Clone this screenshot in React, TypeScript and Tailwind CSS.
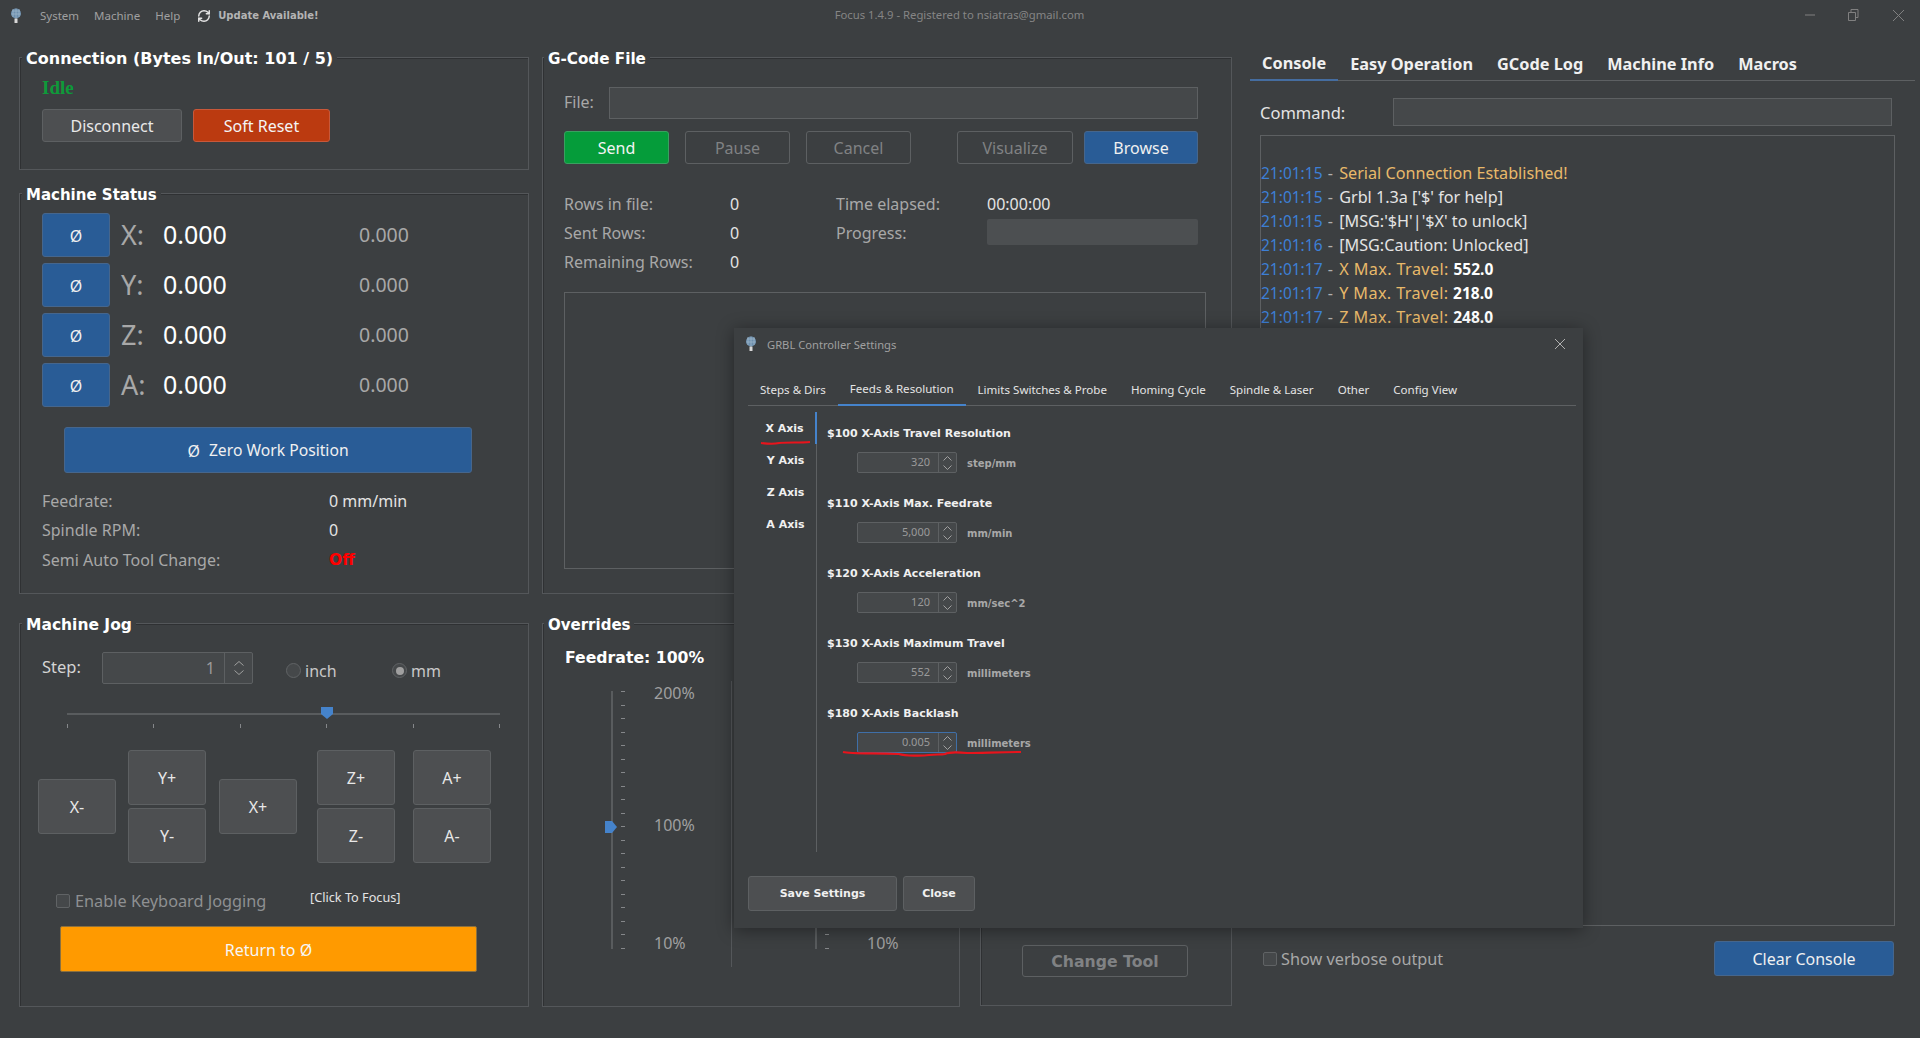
import { RefreshCw } from "lucide-react";

const dejavu = "font-['DejaVu_Sans',sans-serif] font-bold";
const btn = "flex items-center justify-center rounded-[3px] border pt-[1px] text-[16px]";
const grayBtn = `${btn} bg-[#4d4f51] border-[#5d6062] text-[#e8e8e8]`;
const blueBtn = `${btn} bg-[#295c96] border-[#46668c] text-[#f0f0f0]`;
const offBtn = `${btn} border-[#5d6062] text-[#808284]`;
const label = "text-[16px] text-[#a8a8a8]";
const value = "text-[16px] text-[#e4e4e4]";

function Logo() {
  return (
    <svg width="12" height="16" viewBox="0 0 12 16">
      <circle cx="6" cy="5.5" r="5" fill="#6d8fad" />
      <path d="M2 3h8M1.5 6h9M3 1v8M6 0.5v10M9 1v8" stroke="#9db4c8" strokeWidth="0.8" />
      <rect x="4.5" y="10.5" width="3" height="4.5" fill="#d8d8d8" />
    </svg>
  );
}

function Group({ title, size, className, children }: { title?: string; size?: string; className: string; children: React.ReactNode }) {
  return (
    <div className={`relative border border-[#54575a] shadow-[inset_1px_1px_0_#2f3133] ${className}`}>
      {title && (
        <div className={`absolute -top-[11px] bg-[#3c3f41] px-[4px] leading-6 text-white whitespace-nowrap ${dejavu} ${size}`}>
          {title}
        </div>
      )}
      {children}
    </div>
  );
}

function AxisRow({ axis }: { axis: string }) {
  return (
    <div className="flex h-[44px] items-center">
      <div className={`${blueBtn} h-[44px] w-[68px]`}>Ø</div>
      <div className="ml-[11px] w-[42px] text-[27px] text-[#a8a8a8]">{axis}:</div>
      <div className="w-[196px] text-[25px] text-white">0.000</div>
      <div className="text-[19.5px] text-[#a8a8a8]">0.000</div>
    </div>
  );
}

// up/down arrows of a spin box
function SpinArrows({ size }: { size: number }) {
  const h = Math.round(size / 2);
  return (
    <div className="flex flex-col gap-[4px]">
      <svg width={size} height={h} viewBox={`0 0 ${size} ${h}`}>
        <path d={`M0.5 ${h - 0.5}L${size / 2} 0.5L${size - 0.5} ${h - 0.5}`} stroke="#a0a0a0" fill="none" />
      </svg>
      <svg width={size} height={h} viewBox={`0 0 ${size} ${h}`}>
        <path d={`M0.5 0.5L${size / 2} ${h - 0.5}L${size - 0.5} 0.5`} stroke="#a0a0a0" fill="none" />
      </svg>
    </div>
  );
}

function Radio({ text, checked, className }: { text: string; checked?: boolean; className: string }) {
  return (
    <div className={`flex items-center gap-[4px] ${className}`}>
      <div className="flex h-[15px] w-[15px] items-center justify-center rounded-full border border-[#606365] bg-[#45484a]">
        {checked && <div className="h-[8px] w-[8px] rounded-full bg-[#a0a0a0]" />}
      </div>
      <span className="text-[16px] text-[#c8c8c8]">{text}</span>
    </div>
  );
}

function JogBtn({ text, className }: { text: string; className?: string }) {
  return <div className={`${grayBtn} h-[55px] w-[78px] ${className ?? ""}`}>{text}</div>;
}

function VSlider({ labelsAt }: { labelsAt: string }) {
  const ticks = Array.from({ length: 20 });
  return (
    <div className="relative flex h-[258px]">
      <div className="h-[258px] w-[2px] bg-[#595c5e]" />
      <svg className="absolute -left-[6px] top-[130px]" width="12" height="12" viewBox="0 0 12 12">
        <path d="M0 0h7l5 6-5 6H0z" fill="#4583cb" />
      </svg>
      <div className="ml-[8px] flex h-[258px] flex-col justify-between">
        {ticks.map((_, i) => (
          <div key={i} className="h-px w-[4px] bg-[#85878a]" />
        ))}
      </div>
      <div className={`-mt-[8px] text-[16px] leading-5 text-[#a0a0a0] ${labelsAt}`}>
        <div>200%</div>
        <div className="mt-[112px]">100%</div>
        <div className="mt-[98px]">10%</div>
      </div>
    </div>
  );
}

function DialogItem({ title, val, unit, focus }: { title: string; val: string; unit: string; focus?: boolean }) {
  return (
    <div className="h-[70px]">
      <div className={`text-[11px] leading-4 text-[#f0f0f0] ${dejavu}`}>{title}</div>
      <div className="mt-[10px] ml-[30px] flex items-center">
        <div className={`flex h-[21px] w-[100px] rounded-[2px] border bg-[#45484a] ${focus ? "border-[#3f6fa8]" : "border-[#5d6062]"}`}>
          <div className="flex flex-1 items-center justify-end pr-[8px] text-[11px] text-[#9a9a9a]">{val}</div>
          <div className="flex w-[18px] items-center justify-center border-l border-[#5d6062]">
            <SpinArrows size={9} />
          </div>
        </div>
        <span className={`ml-[10px] pt-[2px] text-[10px] text-[#a8a8a8] ${dejavu}`}>{unit}</span>
      </div>
    </div>
  );
}

function SettingsDialog() {
  const tabs = ["Steps & Dirs", "Feeds & Resolution", "Limits Switches & Probe", "Homing Cycle", "Spindle & Laser", "Other", "Config View"];
  return (
    <div className="absolute left-[734px] top-[328px] flex h-[600px] w-[849px] flex-col bg-[#3c3f41] text-[12px] shadow-[0_2px_16px_rgba(0,0,0,0.4)]">
      <div className="flex h-[44px] items-start pt-[8px] pl-[11px] pr-[17px]">
        <Logo />
        <span className="ml-[10px] pt-[1px] text-[11.2px] text-[#a0a0a0]">GRBL Controller Settings</span>
        <svg className="ml-auto mt-[2px]" width="12" height="12" viewBox="0 0 12 12">
          <path d="M1 1l10 10M11 1L1 11" stroke="#b0b0b0" />
        </svg>
      </div>
      <div className="ml-[14px] mr-[7px] flex h-[34px] border-b border-[#5d6062]">
        {tabs.map((t, i) => (
          <div key={t} className={`flex h-[34px] items-center px-[12px] pt-[2px] text-[11.55px] text-[#e4e4e4] ${i === 1 ? "border-b-[2px] border-[#4583cb]" : ""}`}>
            {t}
          </div>
        ))}
      </div>
      <div className="mt-[6px] ml-[14px] flex h-[440px]">
        <div className={`w-[69px] border-r border-[#5d6062] pl-[6px] text-center text-[11px] text-[#f0f0f0] ${dejavu}`}>
          {["X Axis", "Y Axis", "Z Axis", "A Axis"].map((a, i) => (
            <div key={a} className={`-mr-px flex h-[32px] items-center justify-center pt-[2px] ${i === 0 ? "border-r-[2px] border-[#4583cb]" : ""}`}>
              {a}
            </div>
          ))}
        </div>
        <div className="pl-[10px] pt-[14px]">
          <DialogItem title="$100 X-Axis Travel Resolution" val="320" unit="step/mm" />
          <DialogItem title="$110 X-Axis Max. Feedrate" val="5,000" unit="mm/min" />
          <DialogItem title="$120 X-Axis Acceleration" val="120" unit="mm/sec^2" />
          <DialogItem title="$130 X-Axis Maximum Travel" val="552" unit="millimeters" />
          <DialogItem title="$180 X-Axis Backlash" val="0.005" unit="millimeters" focus />
        </div>
      </div>
      <div className={`mt-[24px] ml-[14px] flex gap-[6px] text-[11px] text-[#f0f0f0] ${dejavu}`}>
        <div className="flex h-[35px] w-[149px] items-center justify-center rounded-[3px] border border-[#5d6062] bg-[#4d4f51] pt-[2px]">Save Settings</div>
        <div className="flex h-[35px] w-[72px] items-center justify-center rounded-[3px] border border-[#5d6062] bg-[#4d4f51] pt-[2px]">Close</div>
      </div>
      <svg className="absolute left-[26px] top-[112px]" width="52" height="6" viewBox="0 0 52 6">
        <path d="M1 3c8 1 14 1 18 0c10-1 20 0 31-1" stroke="#e8141c" strokeWidth="2" fill="none" />
      </svg>
      <svg className="absolute left-[106px] top-[421px]" width="190" height="12" viewBox="0 0 190 12">
        <path d="M3 3c8 2 30 1 56 2c6 2 24 2 30 1c6-1 12 0 16-1c4-2 12-2 22-1c14 0 34-1 54-1" stroke="#e8141c" strokeWidth="2.2" fill="none" />
      </svg>
    </div>
  );
}

export default function App() {
  return (
    <div className="relative h-[1038px] w-full overflow-hidden bg-[#3c3f41] font-['Noto_Sans',sans-serif] text-[#e4e4e4]">
      {/* title bar */}
      <div className="relative flex h-[30px] items-center pl-[10px] pt-[1px] text-[11.5px] text-[#a0a0a0]">
        <Logo />
        <span className="ml-[18px]">System</span>
        <span className="ml-[15px]">Machine</span>
        <span className="ml-[15px]">Help</span>
        <RefreshCw size={14} strokeWidth={2.5} className="ml-[17px] text-[#e4e4e4]" />
        <span className={`ml-[7px] text-[10px] text-[#b4b4b4] ${dejavu}`}>Update Available!</span>
        <span className="ml-[516px] text-[11.3px] text-[#858585]">Focus 1.4.9 - Registered to nsiatras@gmail.com</span>
        <svg className="absolute left-[1805px] top-[14px]" width="10" height="2"><path d="M0 1h10" stroke="#808080" /></svg>
        <svg className="absolute left-[1848px] top-[9px]" width="11" height="12" viewBox="0 0 11 12"><path d="M.5 3.5h7v8h-7zM3 3.5V.5h7v8H7.5" stroke="#808080" fill="none" /></svg>
        <svg className="absolute left-[1893px] top-[10px]" width="11" height="11" viewBox="0 0 11 11"><path d="M0 0l11 11M11 0L0 11" stroke="#808080" /></svg>
      </div>

      <div className="flex pl-[19px] pt-[20px]">
        {/* left column */}
        <div className="w-[510px] pt-[7px]">
          <Group title="Connection (Bytes In/Out: 101 / 5)" size="left-[2px] text-[16px]" className="h-[113px] pl-[22px] pt-[18px]">
            <div className="font-['Liberation_Serif',serif] text-[19px] leading-6 font-bold text-[#0e9a3a]">Idle</div>
            <div className="mt-[9px] flex gap-[11px]">
              <div className={`${grayBtn} h-[33px] w-[140px]`}>Disconnect</div>
              <div className={`${btn} h-[33px] w-[137px] border-[#c8583a] bg-[#bb3a10] text-[#f4f4f4]`}>Soft Reset</div>
            </div>
          </Group>
          <Group title="Machine Status" size="left-[2px] text-[15px]" className="mt-[23px] h-[401px] pl-[22px] pt-[19px]">
            <div className="flex flex-col gap-[6px]">
              <AxisRow axis="X" />
              <AxisRow axis="Y" />
              <AxisRow axis="Z" />
              <AxisRow axis="A" />
            </div>
            <div className={`${blueBtn} mt-[20px] ml-[22px] h-[46px] w-[408px]`}>
              <span>Ø</span>
              <span className="ml-[9px] text-[15.7px]">Zero Work Position</span>
            </div>
            <div className="mt-[13px]">
              {[
                ["Feedrate:", "0 mm/min"],
                ["Spindle RPM:", "0"],
              ].map(([k, v]) => (
                <div key={k} className="flex h-[29.5px] items-center">
                  <span className={`${label} w-[287px]`}>{k}</span>
                  <span className={value}>{v}</span>
                </div>
              ))}
              <div className="flex h-[29.5px] items-center">
                <span className={`${label} w-[287px]`}>Semi Auto Tool Change:</span>
                <span className={`pt-[1px] text-[15.5px] text-[#ff0000] ${dejavu}`}>Off</span>
              </div>
            </div>
          </Group>
          <Group title="Machine Jog" size="left-[2px] text-[15.5px]" className="mt-[29px] h-[384px] pl-[22px] pt-[28px]">
            <div className="flex">
              <span className="mt-[3px] w-[60px] text-[16.5px] text-[#d4d4d4]">Step:</span>
              <div className="flex h-[32px] w-[151px] rounded-[2px] border border-[#5d6062] bg-[#45484a]">
                <div className="flex flex-1 items-center justify-end pr-[9px] text-[16px] text-[#9a9a9a]">1</div>
                <div className="flex w-[28px] items-center justify-center border-l border-[#5d6062]">
                  <SpinArrows size={10} />
                </div>
              </div>
              <Radio text="inch" className="mt-[11px] ml-[33px] h-[15px] w-[106px]" />
              <Radio text="mm" checked className="mt-[11px] h-[15px]" />
            </div>
            <div className="relative mt-[29px] ml-[25px] h-[2px] w-[433px] bg-[#595c5e]">
              <svg className="absolute left-[254px] -top-[6px]" width="12" height="12" viewBox="0 0 12 12">
                <path d="M0 0h12v7l-6 5-6-5z" fill="#4583cb" />
              </svg>
            </div>
            <div className="mt-[9px] ml-[25px] flex h-[4px] w-[433px] justify-between">
              {[0, 1, 2, 3, 4, 5].map((i) => (
                <div key={i} className="w-px bg-[#85878a]" />
              ))}
            </div>
            <div className="-ml-[4px] mt-[22px] flex">
              <JogBtn text="X-" className="mt-[29px]" />
              <div className="ml-[12px] flex flex-col gap-[3px]">
                <JogBtn text="Y+" />
                <JogBtn text="Y-" />
              </div>
              <JogBtn text="X+" className="mt-[29px] ml-[13px]" />
              <div className="ml-[20px] flex flex-col gap-[3px]">
                <JogBtn text="Z+" />
                <JogBtn text="Z-" />
              </div>
              <div className="ml-[18px] flex flex-col gap-[3px]">
                <JogBtn text="A+" />
                <JogBtn text="A-" />
              </div>
            </div>
            <div className="mt-[28px] ml-[14px] flex h-[20px] items-center">
              <div className="h-[14px] w-[14px] rounded-[2px] border border-[#606365] bg-[#45484a]" />
              <span className="ml-[5px] w-[235px] text-[16.3px] text-[#8e9092]">Enable Keyboard Jogging</span>
              <span className="-mt-[6px] text-[12.7px] text-[#e4e4e4]">[Click To Focus]</span>
            </div>
            <div className="mt-[15px] ml-[18px] flex h-[46px] w-[417px] items-center justify-center rounded-[2px] border border-[#8a7040] bg-[#ff9a00] pt-[1px] text-[16px] text-[#f6f6f6]">
              Return to Ø
            </div>
          </Group>
        </div>

        {/* middle column */}
        <div className="ml-[13px] w-[690px] pt-[7px]">
          <Group title="G-Code File" size="left-[1px] text-[15.2px]" className="h-[537px] pl-[21px] pt-[29px]">
            <div className="flex items-center">
              <span className={`${label} -mt-[2px] w-[45px]`}>File:</span>
              <div className="h-[32px] w-[589px] border border-[#5d6062] bg-[#45484a]" />
            </div>
            <div className="mt-[12px] flex">
              <div className={`${btn} h-[33px] w-[105px] border-[#3aa060] bg-[#059c3a] text-[#f4f4f4]`}>Send</div>
              <div className={`${offBtn} ml-[16px] h-[33px] w-[105px]`}>Pause</div>
              <div className={`${offBtn} ml-[16px] h-[33px] w-[105px]`}>Cancel</div>
              <div className={`${offBtn} ml-[46px] h-[33px] w-[116px]`}>Visualize</div>
              <div className={`${blueBtn} ml-[11px] h-[33px] w-[114px]`}>Browse</div>
            </div>
            <div className="mt-[25px] flex h-[87px]">
              <div className="w-[272px]">
                {["Rows in file:", "Sent Rows:", "Remaining Rows:"].map((k) => (
                  <div key={k} className="flex h-[29px] items-center">
                    <span className={`${label} w-[166px]`}>{k}</span>
                    <span className={value}>0</span>
                  </div>
                ))}
              </div>
              <div>
                <div className="flex h-[29px] items-center">
                  <span className={`${label} w-[151px]`}>Time elapsed:</span>
                  <span className={value}>00:00:00</span>
                </div>
                <div className="flex h-[29px] items-center">
                  <span className={`${label} w-[151px]`}>Progress:</span>
                  <div className="-mt-[2px] h-[26px] w-[211px] rounded-[2px] bg-[#4c4f51]" />
                </div>
              </div>
            </div>
            <div className="mt-[16px] h-[277px] w-[642px] border border-[#5d6062]" />
          </Group>
          <div className="mt-[29px] flex">
            <Group title="Overrides" size="left-[1px] text-[15px]" className="flex h-[384px] w-[418px]">
              <div className="w-[188px] pl-[22px] pt-[22px]">
                <div className={`text-[15.7px] leading-6 text-white ${dejavu}`}>Feedrate: 100%</div>
                <div className="mt-[21px] ml-[46px]">
                  <VSlider labelsAt="ml-[29px]" />
                </div>
              </div>
              <div className="mt-[57px] h-[286px] w-px bg-[#54575a]" />
              <div className="pl-[83px] pt-[67px]">
                <VSlider labelsAt="ml-[38px]" />
              </div>
            </Group>
            <Group className="ml-[20px] flex h-[383px] w-[252px] flex-col justify-end pb-[28px] pl-[41px]">
              <div className={`${offBtn} h-[32px] w-[166px] !text-[15.7px] ${dejavu}`}>Change Tool</div>
            </Group>
          </div>
        </div>

        {/* right column */}
        <div className="ml-[18px] w-[665px]">
          <div className="flex h-[31px] border-b border-[#5d6062]">
            {["Console", "Easy Operation", "GCode Log", "Machine Info", "Macros"].map((t, i) => (
              <div key={t} className={`flex h-[31px] items-center px-[12px] pb-[3px] text-[16.3px] font-bold text-[#f0f0f0] ${i === 0 ? "border-b-[2px] border-[#456da0]" : ""}`}>
                {t}
              </div>
            ))}
          </div>
          <div className="mt-[17px] flex items-center pl-[10px]">
            <span className="w-[133px] pt-[3px] text-[16.5px] text-[#e4e4e4]">Command:</span>
            <div className="h-[28px] w-[499px] border border-[#5d6062] bg-[#45484a]" />
          </div>
          <div className="mt-[9px] ml-[10px] h-[791px] w-[635px] border border-[#5d6062] pt-[25px] text-[16.2px] leading-6">
            {[
              ["21:01:15", "Serial Connection Established!", "", "text-[#e8b96a]"],
              ["21:01:15", "Grbl 1.3a ['$' for help]", "", "text-[#e4e4e4]"],
              ["21:01:15", "[MSG:'$H'|'$X' to unlock]", "", "text-[#e4e4e4]"],
              ["21:01:16", "[MSG:Caution: Unlocked]", "", "text-[#e4e4e4]"],
              ["21:01:17", "X Max. Travel: ", "552.0", "text-[#e8b96a] tracking-[0.4px]"],
              ["21:01:17", "Y Max. Travel: ", "218.0", "text-[#e8b96a] tracking-[0.4px]"],
              ["21:01:17", "Z Max. Travel: ", "248.0", "text-[#e8b96a] tracking-[0.4px]"],
            ].map(([time, msg, num, color]) => (
              <div key={msg} className="whitespace-pre">
                <span className="text-[15.5px] text-[#3d7fd6]">{time}</span>
                <span className="ml-[1px] mr-[2px] text-[#b0b0b0]"> - </span>
                <span className={color}>{msg}</span>
                <span className="text-[15.5px] font-bold text-white">{num}</span>
              </div>
            ))}
          </div>
          <div className="mt-[15px] flex h-[35px] w-[644px] items-center pl-[13px]">
            <div className="h-[14px] w-[14px] rounded-[2px] border border-[#606365] bg-[#45484a]" />
            <span className="ml-[4px] pt-[2px] text-[16.25px] text-[#a8a8a8]">Show verbose output</span>
            <div className={`${blueBtn} ml-auto h-[35px] w-[180px]`}>Clear Console</div>
          </div>
        </div>
      </div>

      <SettingsDialog />
    </div>
  );
}
